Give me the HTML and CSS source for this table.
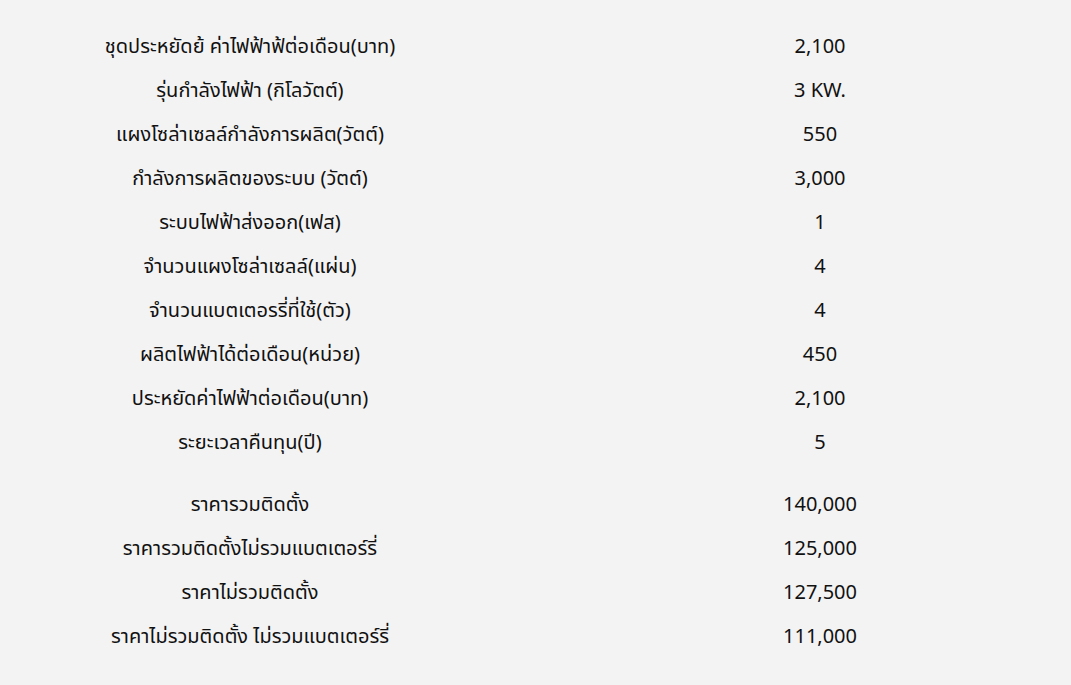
FILE: index.html
```html
<!DOCTYPE html>
<html lang="th">
<head>
<meta charset="utf-8">
<link rel="stylesheet" href="styles.css">
</head>
<body>
<main class="spec">
  <section class="group">
    <div class="row"><span class="label">ชุดประหยัดย้ ค่าไฟฟ้าฟ้ต่อเดือน(บาท)</span><span class="value">2,100</span></div>
    <div class="row"><span class="label">รุ่นกำลังไฟฟ้า (กิโลวัตต์)</span><span class="value">3 KW.</span></div>
    <div class="row"><span class="label">แผงโซล่าเซลล์กำลังการผลิต(วัตต์)</span><span class="value">550</span></div>
    <div class="row"><span class="label">กำลังการผลิตของระบบ (วัตต์)</span><span class="value">3,000</span></div>
    <div class="row"><span class="label">ระบบไฟฟ้าส่งออก(เฟส)</span><span class="value">1</span></div>
    <div class="row"><span class="label">จำนวนแผงโซล่าเซลล์(แผ่น)</span><span class="value">4</span></div>
    <div class="row"><span class="label">จำนวนแบตเตอรรี่ที่ใช้(ตัว)</span><span class="value">4</span></div>
    <div class="row"><span class="label">ผลิตไฟฟ้าได้ต่อเดือน(หน่วย)</span><span class="value">450</span></div>
    <div class="row"><span class="label">ประหยัดค่าไฟฟ้าต่อเดือน(บาท)</span><span class="value">2,100</span></div>
    <div class="row"><span class="label">ระยะเวลาคืนทุน(ปี)</span><span class="value">5</span></div>
  </section>
  <section class="group">
    <div class="row"><span class="label">ราคารวมติดตั้ง</span><span class="value">140,000</span></div>
    <div class="row"><span class="label">ราคารวมติดตั้งไม่รวมแบตเตอร์รี่</span><span class="value">125,000</span></div>
    <div class="row"><span class="label">ราคาไม่รวมติดตั้ง</span><span class="value">127,500</span></div>
    <div class="row"><span class="label">ราคาไม่รวมติดตั้ง ไม่รวมแบตเตอร์รี่</span><span class="value">111,000</span></div>
  </section>
</main>
</body>
</html>
```
FILE: styles.css
```css
html, body {
  margin: 0;
  background: #f3f3f3;
}
body {
  font-family: "Noto Sans", "Noto Sans Thai", "DejaVu Sans", sans-serif;
  font-size: 20px;
  color: #111;
}
.spec {
  padding: 24px 0 0 40px;
  display: flex;
  flex-direction: column;
  gap: 18px;
}
.group {
  display: flex;
  flex-direction: column;
}
.row {
  display: grid;
  grid-template-columns: 420px 360px;
  column-gap: 180px;
  height: 44px;
  align-items: baseline;
}
.label, .value {
  text-align: center;
  white-space: nowrap;
  line-height: 43px;
}
```
